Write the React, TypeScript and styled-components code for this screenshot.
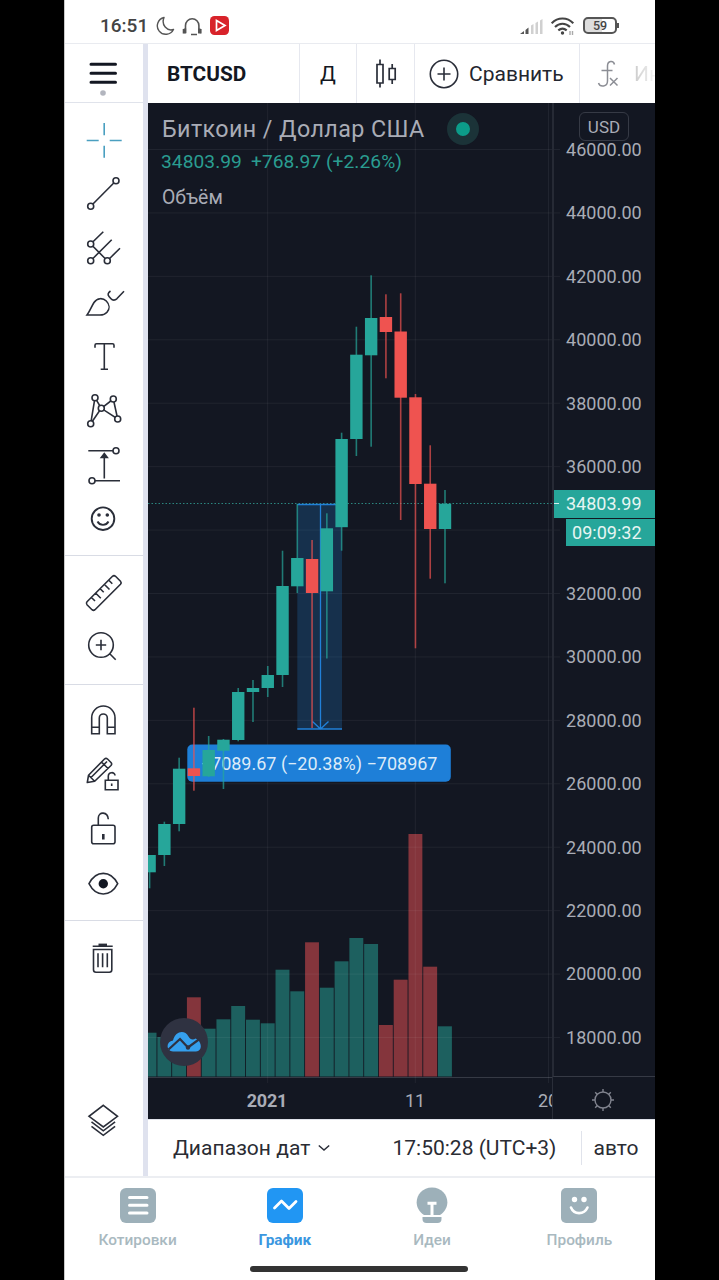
import React from "react";
import styled, {createGlobalStyle} from "styled-components";

const UP = '#26a69a';
const DOWN = '#ef5350';
const INK = '#2a2e39';

const GlobalStyle = createGlobalStyle`
    * {
        box-sizing: border-box;
    }
    body {
        margin: 0;
        background: #000;
        font-family: Roboto, "Noto Sans", sans-serif;
    }
    svg {
        display: block;
        flex: none;
    }
`;
const Screen = styled.div`
    width: 719px;
    height: 1280px;
    display: flex;
    justify-content: center;
    background: #000;
`;
const Phone = styled.div`
    width: 591px;
    height: 1280px;
    display: flex;
    flex-direction: column;
    background: #fff;
    border-left: 1px solid #c9c9c9;
    overflow: hidden;
`;
const StatusBar = styled.div`
    height: 44px;
    padding: 8px 38px 0 35px;
    display: flex;
    align-items: center;
    justify-content: space-between;
    border-bottom: 1px solid #e9ebf0;
`;
const StatusSide = styled.div<{
    gap: number;
}>`
    display: flex;
    align-items: center;
    gap: ${props => props.gap}px;
`;
const Clock = styled.span`
    font-size: 19px;
    font-weight: 500;
    line-height: 22px;
    color: #444;
    margin-right: 1px;
`;
const Battery = styled.div`
    width: 34px;
    height: 17px;
    border: 2px solid #555;
    border-radius: 5px;
    background: linear-gradient(90deg, #ddd 58%, #fff 58%);
    font-size: 12.5px;
    font-weight: 500;
    line-height: 14px;
    text-align: center;
    color: #444;
    position: relative;
    &::after {
        content: '';
        width: 2px;
        height: 5px;
        background: #555;
        position: absolute;
        right: -4px;
        top: 4px;
    }
`;
const Workspace = styled.div`
    height: 1134px;
    display: flex;
    border-bottom: 2px solid #eceef2;
`;
const ToolColumn = styled.div`
    width: 83px;
    flex: none;
    display: flex;
    flex-direction: column;
    border-right: 5px solid #dfe2ee;
`;
const MenuCell = styled.div`
    height: 59px;
    padding: 18px 2px 0 0;
    display: flex;
    justify-content: center;
    border-bottom: 1px solid #e0e3eb;
`;
const ToolGroup = styled.div<{
    top?: number;
    last?: boolean;
}>`
    padding: ${props => props.top || 10}px 0 ${props => props.top ? 11 : 10}px;
    border-bottom: ${props => props.last ? 'none' : '1px solid #d9dce5'};
`;
const ToolSlot = styled.div`
    height: 54px;
    padding-right: 2px;
    display: flex;
    align-items: center;
    justify-content: center;
    svg {
        width: 44px;
        height: 44px;
        overflow: visible;
        fill: none;
        stroke: ${INK};
        stroke-width: 1.6px;
    }
`;
const LayersSlot = styled(ToolSlot)`
    margin-top: auto;
    margin-bottom: 28px;
`;
const Main = styled.div`
    flex: 1;
    min-width: 0;
    display: flex;
    flex-direction: column;
`;
const TopBar = styled.div`
    height: 59px;
    flex: none;
    display: flex;
    overflow: hidden;
    color: #131722;
`;
const TopCell = styled.div<{
    width: number;
    left?: number;
}>`
    width: ${props => props.width}px;
    flex: none;
    display: flex;
    align-items: center;
    padding-left: ${props => props.left || 0}px;
    justify-content: ${props => props.left ? 'flex-start' : 'center'};
    border-right: 1px solid #e6e8ef;
    font-size: 21px;
    white-space: nowrap;
`;
const Symbol = styled.span`
    font-weight: 700;
    font-size: 20.8px;
    letter-spacing: 0;
`;
const CompareText = styled.span`
    margin-left: 10px;
    font-size: 21px;
    color: #23262f;
`;
const FadedText = styled.span`
    margin-left: 15px;
    font-size: 21px;
    background: linear-gradient(90deg, #ccc 0, #eee 18px, #fff 24px);
    background-clip: text;
    color: transparent;
`;
const ChartArea = styled.div`
    height: 1016px;
    display: grid;
    grid-template-columns: 404px 1fr;
    grid-template-rows: 974px 42px;
    background: #131722;
    color: #a9acb6;
    position: relative;
`;
const Plot = styled.svg`
    width: 412px;
    height: 982px;
    overflow: hidden;
    grid-area: 1 / 1;
`;
const PriceAxis = styled.div`
    grid-area: 1 / 2;
    border-left: 2px solid #262a35;
    border-bottom: 1px solid #363a45;
    padding: 15px 0 0 12px;
    font-size: 18px;
    overflow: hidden;
    position: relative;
`;
const PriceLabel = styled.div`
    height: 63.43px;
    line-height: 63.4px;
    letter-spacing: .02px;
`;
const PriceTag = styled.div<{
    top: number;
    left: number;
    height: number;
}>`
    position: absolute;
    top: ${props => props.top}px;
    left: ${props => props.left}px;
    right: 0;
    height: ${props => props.height}px;
    line-height: ${props => props.height}px;
    padding-right: 13.5px;
    text-align: right;
    color: #e6f5f3;
    background: ${UP};
`;
const TagTick = styled.i`
    position: absolute;
    left: 0;
    top: 13px;
    width: 6px;
    height: 1px;
    background: #d3efec;
`;
const Currency = styled.div`
    position: absolute;
    left: 25px;
    top: 9px;
    width: 50px;
    height: 29px;
    line-height: 28px;
    text-align: center;
    border: 1px solid #363a45;
    border-radius: 6px;
    font-size: 17px;
`;
const TimeAxis = styled.div`
    grid-area: 2 / 1;
    border-top: 1px solid #363a45;
    display: flex;
    overflow: hidden;
    font-size: 18px;
    line-height: 45px;
`;
const TimeLabel = styled.span<{
    width: number;
    bold?: boolean;
}>`
    width: ${props => props.width}px;
    flex: none;
    text-align: center;
    font-weight: ${props => props.bold ? 700 : 400};
    letter-spacing: ${props => props.bold ? -.2 : 0}px;
`;
const AxisCorner = styled.div`
    grid-area: 2 / 2;
    display: flex;
    align-items: center;
    justify-content: center;
    padding: 3px 2px 0 0;
    border-left: 1px solid #2a2e39;
`;
const Legend = styled.div`
    position: absolute;
    left: 12px;
    top: 9px;
`;
const LegendTitle = styled.div`
    display: flex;
    align-items: center;
    height: 34px;
    font-size: 23.3px;
    letter-spacing: .4px;
    padding-left: 2px;
`;
const LiveDot = styled.i`
    width: 32px;
    height: 32px;
    margin-left: 22px;
    border: 9px solid #1b3338;
    border-radius: 50%;
    background: #0c9c89;
`;
const LegendValues = styled.div`
    padding-left: 1px;
    font-size: 19.2px;
    line-height: 32px;
    letter-spacing: .05px;
    color: #2a9d91;
    span {
        margin-left: 9px;
    }
`;
const LegendVolume = styled.div`
    margin-top: 4px;
    padding-left: 2px;
    font-size: 19.4px;
    line-height: 31px;
`;
const CloudButton = styled.div`
    position: absolute;
    left: 12px;
    top: 915px;
    width: 48px;
    height: 48px;
    padding-right: 1px;
    display: flex;
    align-items: center;
    justify-content: center;
    border-radius: 50%;
    background: #2f3241;
`;
const RangeBar = styled.div`
    flex: 1;
    display: flex;
    align-items: center;
    padding-left: 25px;
    font-size: 21px;
    color: #2a2c33;
    border-top: 1px solid #e0e3eb;
    white-space: nowrap;
`;
const RangeText = styled.span`
    letter-spacing: .05px;
    margin-right: 8px;
`;
const TimeText = styled.span`
    margin-left: 62px;
    width: 190px;
    margin-right: 11px;
    line-height: 34px;
    border-right: 1px solid #e0e3eb;
`;
const TabBar = styled.div`
    display: flex;
    height: 88px;
    padding-right: 2px;
    margin-left: -1px;
`;
const Tab = styled.div<{
    active?: boolean;
}>`
    flex: 1;
    padding-top: 9px;
    display: flex;
    flex-direction: column;
    align-items: center;
    font-size: 15.4px;
    font-weight: ${props => props.active ? 700 : 500};
    line-height: 18px;
    color: ${props => props.active ? '#3b97e0' : '#a9b9c0'};
    svg {
        margin-bottom: 8px;
    }
`;
const HomeIndicator = styled.div`
    width: 218px;
    height: 6px;
    margin-left: 185px;
    border-radius: 3px;
    background: #333;
`;

// [open/close top, open/close bottom, high, low, volume top, falling], oldest bar first
type Bar = [number, number, number, number, number, boolean?];
const bars: Bar[] = [
    [855, 872.3, 855, 888.3, 1032.7],
    [824, 855, 821.7, 866, 1037],
    [768.7, 824, 757.7, 831.3, 1034],
    [768.3, 776, 707.7, 790.7, 997.3, true],
    [750, 776.3, 736, 777, 1028.7],
    [739.7, 750.7, 739, 789, 1019.3],
    [692, 740, 688, 741.3, 1006],
    [688, 692, 680, 722, 1019.7],
    [675, 688, 666, 697, 1023.3],
    [586, 675, 550.7, 687, 969.7],
    [558, 586.3, 504, 593, 991.3],
    [559, 593, 540, 728, 942.3, true],
    [528.3, 591.3, 513.3, 658.5, 987.7],
    [439, 527.2, 432.7, 550.7, 961.3],
    [354.7, 439, 326.7, 456, 938],
    [318, 355.3, 275.3, 446.7, 944],
    [317, 332, 294.3, 378.3, 1025, true],
    [331.5, 397.7, 293.3, 520, 979.7, true],
    [397.3, 484, 394, 648.3, 834, true],
    [483.7, 529, 445.3, 578.7, 966.7, true],
    [503.7, 529, 490, 583.3, 1026.3],
];
const barX = (i: number) => 149.6 + i * 14.77;
const gridY = Array.from({length: 15}, (_, i) => 149.5 + i * 63.43);
const prices = Array.from({length: 15}, (_, i) => 46000 - i * 2000);

const PricePlot: React.FC = () => (
    <Plot viewBox="148 103 412 982">
        {bars.map((b, i) => (
            <rect
            key={i}
            x={barX(i) - 7}
            y={b[4]}
            width="13.9"
            height={1076.5 - b[4]}
            fill={b[5] ? '#84353c' : '#1d605f'}
            />
        ))}
        <g stroke="#fff" strokeOpacity=".06">
            {gridY.map(y => <line key={y} x1="148" x2="560" y1={y} y2={y} />)}
            {[267.7, 415.3, 548.5].map(x => <line key={x} x1={x} x2={x} y1="103" y2="1083" />)}
        </g>
        <line x1="148" x2="553" y1="503.5" y2="503.5" stroke="#2b8780" strokeDasharray="1.5 2" />
        <rect x="297.3" y="504" width="44.7" height="225" fill="#2196f3" fillOpacity=".2" />
        <g stroke="#2180d8" strokeWidth="1.3" fill="none">
            <path d="M297.3 504.5H342M297.3 729H342M320.5 504v224M312.5 721.5l8 7.5 8-7.5" />
        </g>
        <rect x="187.3" y="744.5" width="263.5" height="37.3" rx="5" fill="#1e7fd8" />
        <text x="437.5" y="770" fontSize="18" fill="#dcebf8" textAnchor="end">−7089.67 (−20.38%) −708967</text>
        {bars.map((b, i) => {
            const color = b[5] ? DOWN : UP;
            return <g key={i}>
                <rect x={barX(i) - .8} y={b[2]} width="1.6" height={b[3] - b[2]} fill={color} fillOpacity=".7" />
                <rect x={barX(i) - 6.2} y={b[0]} width="12.4" height={b[1] - b[0]} fill={color} />
            </g>
        })}
    </Plot>
);

const Dots: React.FC<{points: number[][]}> = ({points}) => <>
    {points.map(([x, y]) => <circle key={`${x}-${y}`} cx={x} cy={y} r="3" fill="#fff" />)}
</>;

const drawTools = [
    <path key="cross" stroke="#4a9fc0" d="M5.7 22.5h12M28.7 22.5h12M23.2 5v12.3M23.2 27.7v12" />,
    <g key="line">
        <path d="M9.7 34.3L35 8.7" />
        <Dots points={[[9.7, 34.3], [35, 8.7]]} />
    </g>,
    <g key="fork">
        <path d="M22.3 5.7L9.7 18l16.6 16.7L39 22.3M9.7 34.7l21-21" />
        <Dots points={[[9.7, 18], [9.7, 34.7], [26.3, 34.7]]} />
    </g>,
    <path key="brush" d="M6 35C9 31 10.500 26.500 13 22.500c3.200-5 9-4.700 12.300-1.500 3.500 3.500 3.500 8 .7 11.200C24.200 34.200 22.500 35 19 35zM29.500 11c-2.800 2-3 3.800-1.300 5.700l1.800 2.100c1.500 1.700 4 1.700 5.800 0L43 11.200" />,
    <path key="text" d="M14 13.700v-2.500q0-1.500 1.500-1.500h16q1.500 0 1.500 1.500v2.500M23.300 9.700v25.600M19.700 35.300h7.300" />,
    <g key="pattern">
        <path d="M14 9.7L9.7 35.700l10.600-15.400zM20.300 20.300L32.300 11l4.400 20z" />
        <Dots points={[[14, 9.7], [32.3, 11], [20.3, 20.3], [9.7, 35.7], [36.7, 31]]} />
    </g>,
    <g key="position">
        <path d="M7.300 8.700H33M12 38.700h27M23.300 36.500V14" />
        <path d="M20.300 15.500l3-4 3 4z" fill={INK} />
        <Dots points={[[35, 8.7], [11, 38.7]]} />
    </g>,
    <g key="smile" strokeWidth="1.9">
        <circle cx="22" cy="22.700" r="11.300" />
        <path d="M16.500 25.500c2.500 4.500 8.500 4.500 11 0" />
        <circle cx="18" cy="19" r="1.800" fill={INK} stroke="none" />
        <circle cx="26.300" cy="19" r="1.800" fill={INK} stroke="none" />
    </g>,
];
const measureTools = [
    <path key="ruler" strokeLinejoin="round" d="M31.500 5.300q1.500-1.300 3 0l5 5q1.300 1.500 0 3L14 38.700q-1.500 1.300-3 0l-5-5q-1.300-1.500 0-3zM10.500 26.500l3.500 3.500M14.800 22.200l5 5M19.200 17.800l3.500 3.500M23.500 13.500l5 5M27.800 9.200l3.500 3.500" />,
    <path key="zoom" d="M32.300 20a12.300 12.300 0 1 1-24.600 0a12.300 12.300 0 1 1 24.600 0M20 14.800v10.400M14.800 20h10.400M29 29l5.700 5.700" />,
];
const stateTools = [
    <path key="magnet" d="M10.700 35.700v-16a11.650 11.650 0 0 1 23.300 0v16h-7.700V20a4 4 0 0 0-8 0v15.700zM10.700 29.300h7.600M26.300 29.300H34" />,
    <g key="pencil">
        <path strokeLinejoin="round" d="M6.300 30.500l1.200-7.200L23.500 7q1.500-1.300 3 0l3.500 3.500q1.300 1.500 0 3L13.700 29.300zM7.500 23.300l6.200 6M10 25.500l16-16M20.500 10l6.500 6.500" />
        <path fill="#fff" d="M24.300 28.300H37v9.400H24.300zM27.300 28.300v-4c0-4.700 6.700-4.700 6.700-.8M30.700 31.500v2.500" />
    </g>,
    <g key="lock">
        <rect x="10.700" y="19.300" width="23.300" height="18.400" rx="2" />
        <path d="M17.300 19.300V12c0-6.700 9.500-6.700 10 1.300" />
        <path d="M22.300 28v5.500" strokeWidth="2.600" />
    </g>,
    <g key="eye">
        <path d="M8 23.700C15 9.900 29.500 9.900 36.700 23.700C29.500 37.500 15 37.500 8 23.700z" />
        <circle cx="22.300" cy="23.700" r="4.700" fill="#131722" stroke="none" />
    </g>,
];

const App: React.FC = () => {
    return <>
        <GlobalStyle />
        <Screen>
            <Phone>
                <StatusBar>
                    <StatusSide gap={7}>
                        <Clock>16:51</Clock>
                        <svg width="19" height="20" viewBox="0 0 19 20" fill="none" stroke="#555" strokeWidth="1.4" strokeLinejoin="round">
                            <path d="M8 1.500A8.500 8.500 0 1 0 17.500 13.500C11 15.500 5 9 8 1.500z" />
                        </svg>
                        <svg width="21" height="20" viewBox="0 0 21 20" fill="none" stroke="#555" strokeWidth="1.600">
                            <path d="M3.500 17V9.500a6.700 6.700 0 0 1 13.400 0V17M1.500 13v4.500M18.800 13v4.500M9 18.500h6" />
                            <path d="M3 12.500v5M17.300 12.500v5" strokeWidth="2.400" />
                        </svg>
                        <svg width="19" height="19" viewBox="0 0 19 19">
                            <rect width="19" height="19" rx="4.500" fill="#d8232a" />
                            <path d="M6.500 4.500l8.500 5-8.500 5z" fill="none" stroke="#fff" strokeWidth="1.700" />
                            <path d="M8 11l4-1.500-4-2z" fill="#d8232a" />
                        </svg>
                    </StatusSide>
                    <StatusSide gap={8}>
                        <svg width="23" height="16" viewBox="0 0 23 16">
                            <path d="M0 16l4-3v3zM5.500 12l3-2.500V16h-3z" fill="#555" />
                            <path d="M11 7.500l2.500-1.500v10H11zM15.500 5l2.500-1.500V16h-2.500zM20 2.500L22.500 1v15H20z" fill="#d0d0d0" />
                        </svg>
                        <svg width="24" height="18" viewBox="0 0 24 18" fill="none" stroke="#444" strokeWidth="2.100">
                            <path d="M.7 6.300c6-6.400 15.600-6.400 21.600 0M4 10c4.300-4.300 10.700-4.300 15 0M7.300 13.400c2.600-2.300 5.800-2.300 8.400 0" />
                            <circle cx="11.500" cy="16" r="1.700" fill="#444" stroke="none" />
                            <path d="M19 14v4M21.500 14v4" stroke="#aaa" strokeWidth="1.400" />
                        </svg>
                        <Battery>59</Battery>
                    </StatusSide>
                </StatusBar>
                <Workspace>
                    <ToolColumn>
                        <MenuCell>
                            <svg width="28" height="36" viewBox="0 0 28 36" stroke="#131722" strokeWidth="3" strokeLinecap="round">
                                <path d="M2 2.200h24.500M2 11.200h24.500M2 20.200h24.500" />
                                <circle cx="14" cy="31" r="2.800" fill="#b2b5be" stroke="none" />
                            </svg>
                        </MenuCell>
                        <ToolGroup>
                            {drawTools.map(icon => <ToolSlot key={icon.key}><svg viewBox="0 0 44 44">{icon}</svg></ToolSlot>)}
                        </ToolGroup>
                        <ToolGroup>
                            {measureTools.map(icon => <ToolSlot key={icon.key}><svg viewBox="0 0 44 44">{icon}</svg></ToolSlot>)}
                        </ToolGroup>
                        <ToolGroup top={8}>
                            {stateTools.map(icon => <ToolSlot key={icon.key}><svg viewBox="0 0 44 44">{icon}</svg></ToolSlot>)}
                        </ToolGroup>
                        <ToolGroup last>
                            <ToolSlot>
                                <svg viewBox="0 0 44 44">
                                    <path d="M11.700 10.300h20M12.500 13.500h18.300v20.300q0 2.500-2.500 2.500H15q-2.500 0-2.500-2.500zM17 17.300v14M21.600 17.300v14M26.300 17.300v14" />
                                    <path d="M17.500 8.800h8.500" strokeWidth="2.400" />
                                </svg>
                            </ToolSlot>
                        </ToolGroup>
                        <LayersSlot>
                            <svg viewBox="0 0 44 44">
                                <path d="M22.300 6.300l14.200 11-14.200 10.700L8 17.300zM10.500 22.800l11.800 9 11.800-9M10.500 27.300l11.800 9 11.800-9" />
                            </svg>
                        </LayersSlot>
                    </ToolColumn>
                    <Main>
                        <TopBar>
                            <TopCell width={152} left={19}><Symbol>BTCUSD</Symbol></TopCell>
                            <TopCell width={57}>Д</TopCell>
                            <TopCell width={58}>
                                <svg width="22" height="32" viewBox="0 0 22 32" fill="none" stroke={INK} strokeWidth="1.700">
                                    <path d="M2 6.500h6v18.500H2zM5 1.500v5M5 25v4.500M14.200 10.500h6v11h-6zM17.200 6v4.500M17.200 21.500V26" />
                                </svg>
                            </TopCell>
                            <TopCell width={165} left={14}>
                                <svg width="30" height="30" viewBox="0 0 30 30" fill="none" stroke={INK} strokeWidth="1.600">
                                    <circle cx="15" cy="15" r="13.700" />
                                    <path d="M15 8.500v13M8.500 15h13" />
                                </svg>
                                <CompareText>Сравнить</CompareText>
                            </TopCell>
                            <TopCell width={90} left={17}>
                                <svg width="22" height="28" viewBox="0 0 22 28" fill="none" stroke="#8c8e95" strokeWidth="1.500">
                                    <path d="M17.500 4.500C16.500 0 10.500.5 10.500 6v15c0 6-7.500 6.500-9 2M4.500 10.500h11M13 18l7.500 7.500M20.500 18L13 25.500" />
                                </svg>
                                <FadedText>Ин</FadedText>
                            </TopCell>
                        </TopBar>
                        <ChartArea>
                            <PriceAxis>
                                {prices.map(p => <PriceLabel key={p}>{p === 34000 ? '' : p.toFixed(2)}</PriceLabel>)}
                                <Currency>USD</Currency>
                                <PriceTag top={387} left={-1} height={28}><TagTick />34803.99</PriceTag>
                                <PriceTag top={416} left={12} height={27}>09:09:32</PriceTag>
                            </PriceAxis>
                            <TimeAxis>
                                <TimeLabel width={238} bold>2021</TimeLabel>
                                <TimeLabel width={58}>11</TimeLabel>
                                <TimeLabel width={208}>20</TimeLabel>
                            </TimeAxis>
                            <AxisCorner>
                                <svg width="24" height="24" viewBox="0 0 24 24" fill="none" stroke="#80838e" strokeWidth="1.400">
                                    <circle cx="12" cy="12" r="8" />
                                    <path d="M12 1v3M12 20V23M1 12h3M20 12H23M4.200 4.200l2.200 2.200M17.600 17.600l2.200 2.200M4.200 19.800l2.200-2.200M17.600 6.400l2.200-2.200" />
                                </svg>
                            </AxisCorner>
                            <PricePlot />
                            <Legend>
                                <LegendTitle>Биткоин / Доллар США<LiveDot /></LegendTitle>
                                <LegendValues>34803.99<span>+768.97 (+2.26%)</span></LegendValues>
                                <LegendVolume>Объём</LegendVolume>
                            </Legend>
                            <CloudButton>
                                <svg width="34" height="20" viewBox="0 0 34 20">
                                    <path d="M6 19.500C-1.500 18.500-1 9.500 6 8.500 8.500-1.500 18-2.200 21.500 4.500 23 7.500 26 8.500 28.500 6.500 35 9 36 18.800 29 19.500z" fill="#35a0ee" />
                                    <path d="M1.500 17.500L13 7l8 8.500L32.500 7" fill="none" stroke="#2f3241" strokeWidth="2.200" />
                                    <circle cx="21" cy="15.500" r="2.200" fill="#2f3241" />
                                </svg>
                            </CloudButton>
                        </ChartArea>
                        <RangeBar>
                            <RangeText>Диапазон дат</RangeText>
                            <svg width="12" height="8" viewBox="0 0 12 8" fill="none" stroke={INK} strokeWidth="1.500">
                                <path d="M.8 1.500L6 6l5.200-4.500" />
                            </svg>
                            <TimeText>17:50:28 (UTC+3)</TimeText>
                            авто
                        </RangeBar>
                    </Main>
                </Workspace>
                <TabBar>
                    <Tab>
                        <svg width="36" height="36" viewBox="0 0 36 36">
                            <rect y="1" width="36" height="35" rx="6" fill="#9db0b9" />
                            <path d="M9.500 10.500h17.500M9.500 18.200h17.500M9.500 26h17.500" stroke="#fff" strokeWidth="3" strokeLinecap="round" />
                        </svg>
                        Котировки
                    </Tab>
                    <Tab active>
                        <svg width="36" height="36" viewBox="0 0 36 36">
                            <rect y="1" width="36" height="35" rx="6" fill="#2196f3" />
                            <path d="M7.500 21l7-7 7.500 7.500 7-7" fill="none" stroke="#fff" strokeWidth="2.800" strokeLinecap="round" strokeLinejoin="round" />
                        </svg>
                        График
                    </Tab>
                    <Tab>
                        <svg width="36" height="36" viewBox="0 0 36 36">
                            <path d="M10 28C-3.500 19 3 .5 18 .5S39.500 19 26 28z" fill="#9db0b9" />
                            <path d="M8.500 30h19v2q0 4-4 4h-11q-4 0-4-4z" fill="#9db0b9" />
                            <path d="M13.500 16.200h9M18 16v12.500" stroke="#fff" strokeWidth="3" />
                        </svg>
                        Идеи
                    </Tab>
                    <Tab>
                        <svg width="36" height="36" viewBox="0 0 36 36">
                            <rect y="1" width="36" height="35" rx="5" fill="#9db0b9" />
                            <circle cx="13.500" cy="12.500" r="2.700" fill="#fff" />
                            <circle cx="23" cy="12.500" r="2.700" fill="#fff" />
                            <path d="M10 20.500c3 7.500 13 7.500 16.500 0" fill="none" stroke="#fff" strokeWidth="2.600" strokeLinecap="round" />
                        </svg>
                        Профиль
                    </Tab>
                </TabBar>
                <HomeIndicator />
            </Phone>
        </Screen>
    </>
}
export default App;
